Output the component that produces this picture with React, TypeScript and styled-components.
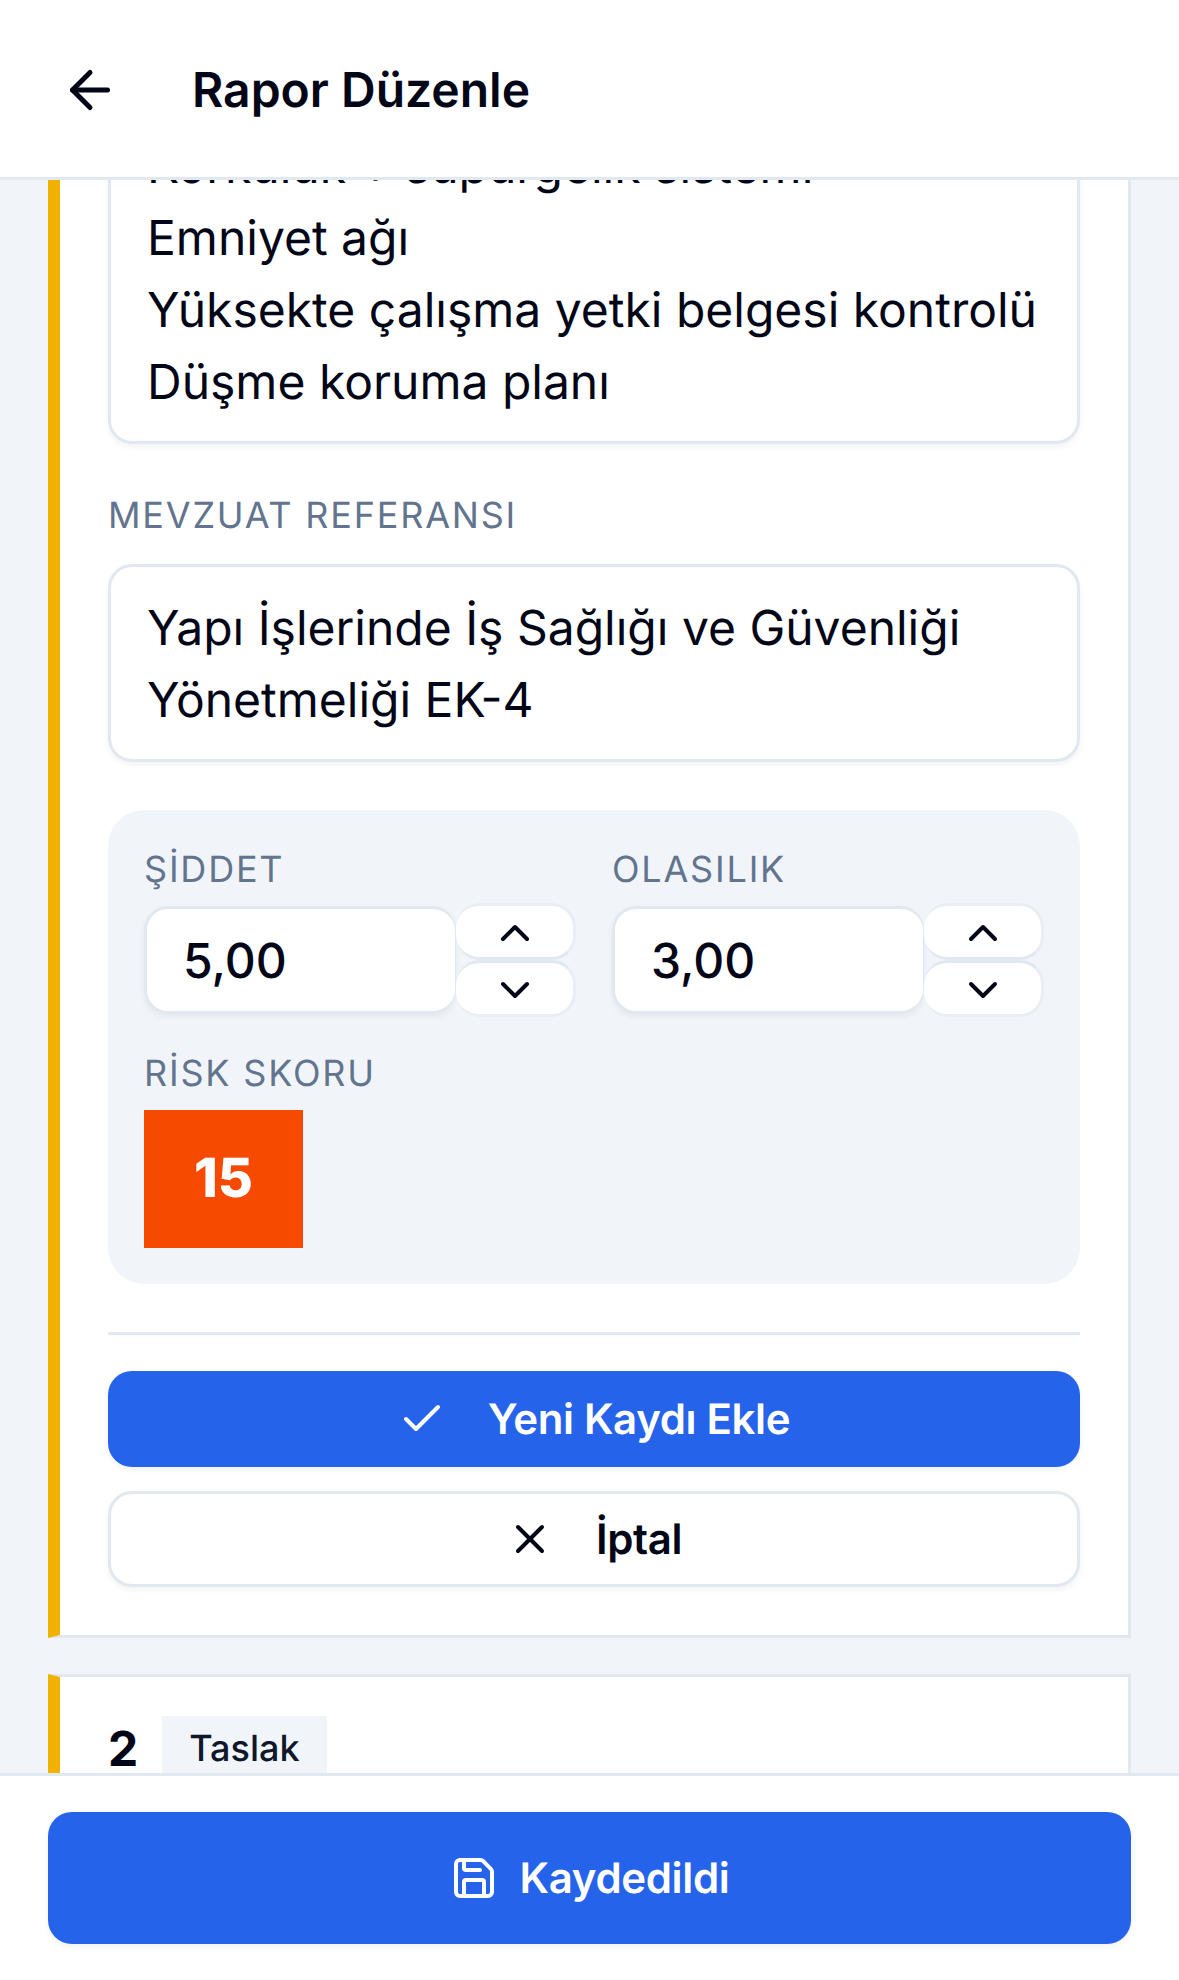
import React from "react";
import styled, { createGlobalStyle } from "styled-components";
import { ArrowLeft, Check, ChevronDown, ChevronUp, Save, X } from "lucide-react";

const Global = createGlobalStyle`
  html, body { margin: 0; padding: 0; background: #fff; }
  * { box-sizing: border-box; text-rendering: geometricPrecision; }
  body { font-family: Inter, "Noto Sans", sans-serif; color: #020617; }
`;

const Screen = styled.div`
  width: 1179px;
  height: 1980px;
  display: flex;
  flex-direction: column;
  overflow: hidden;
  background: #f1f5f9;
`;

const Header = styled.header`
  flex: none;
  height: 180px;
  display: flex;
  align-items: center;
  gap: 72px;
  padding: 3px 0 0 60px;
  background: #fff;
  border-bottom: 3px solid #e2e8f0;
`;

const BackIcon = styled(ArrowLeft)`
  flex: none;
  color: #020617;
`;

const Title = styled.h1`
  margin: 0;
  font-size: 48px;
  line-height: 72px;
  font-weight: 600;
  color: #020617;
`;

const Viewport = styled.main`
  flex: 1;
  min-height: 0;
  overflow: hidden;
  padding: 0 48px;
`;

const CardList = styled.div`
  display: flex;
  flex-direction: column;
  gap: 36px;
  margin-top: -129px;
`;

const Card = styled.section`
  background: #fff;
  border: 3px solid #e2e8f0;
  border-left: 12px solid #f0b100;
  padding: 48px;
  display: flex;
  flex-direction: column;
`;

const Field = styled.div`
  border: 3px solid #e2e8f0;
  border-radius: 24px;
  background: #fff;
  padding: 25px 36px 23px;
  font-size: 48px;
  line-height: 72px;
  color: #020617;
  white-space: pre-line;
  box-shadow: 0 3px 6px rgba(15, 23, 42, 0.05);
`;

const Label = styled.div`
  height: 48px;
  font-size: 36px;
  line-height: 46px;
  font-weight: 400;
  letter-spacing: 1.8px;
  color: #62748e;
`;

const SectionLabel = styled(Label)`
  margin: 48px 0 24px;
`;

const ScorePanel = styled.div`
  margin-top: 48px;
  padding: 36px;
  border-radius: 36px;
  background: #f1f5f9;
`;

const ScoreGrid = styled.div`
  display: grid;
  grid-template-columns: repeat(2, minmax(0, 1fr));
  column-gap: 36px;
`;

const ScoreColumn = styled.div`
  min-width: 0;
  display: flex;
  flex-direction: column;
  gap: 12px;
`;

const NumberRow = styled.div`
  display: flex;
  height: 108px;
`;

const NumberInput = styled.input`
  flex: 1;
  width: 0;
  min-width: 0;
  height: 108px;
  border: 3px solid #e2e8f0;
  border-right-width: 1px;
  border-radius: 24px;
  background: #fff;
  padding: 1px 36px 0;
  font: 500 48px/72px Inter, sans-serif;
  color: #020617;
  outline: none;
  box-shadow: 0 3px 6px rgba(15, 23, 42, 0.05);
`;

const Stepper = styled.div`
  flex: none;
  width: 120px;
  margin: -3px 0;
  height: 114px;
  display: flex;
  flex-direction: column;
`;

const StepButton = styled.button`
  flex: 1;
  display: flex;
  align-items: center;
  justify-content: center;
  padding: 3px 0 0;
  border: 3px solid #e9eef5;
  border-left-width: 0;
  border-radius: 24px;
  background: #fff;
  color: #020617;

  &:first-child {
    border-bottom-color: #e2e8f0;
  }

  &:last-child {
    border-top-color: #e2e8f0;
  }
`;

const RiskBlock = styled.div`
  margin-top: 36px;
  display: flex;
  flex-direction: column;
  align-items: flex-start;
  gap: 12px;
`;

const RiskBadge = styled.div`
  width: 159px;
  height: 138px;
  padding-bottom: 1px;
  display: flex;
  align-items: center;
  justify-content: center;
  background: #f54a00;
  color: #fff;
  font-size: 54px;
  font-weight: 800;
`;

const Divider = styled.hr`
  margin: 48px 0 36px;
  height: 3px;
  border: 0;
  background: #e2e8f0;
`;

const Actions = styled.div`
  display: flex;
  flex-direction: column;
  gap: 24px;
`;

const ActionButton = styled.button<{ $primary?: boolean }>`
  height: 96px;
  display: flex;
  align-items: center;
  justify-content: center;
  gap: 42px;
  padding: 0;
  border-radius: 24px;
  border: ${(p) => (p.$primary ? "0" : "3px solid #e2e8f0")};
  background: ${(p) => (p.$primary ? "#2563eb" : "#fff")};
  color: ${(p) => (p.$primary ? "#fff" : "#020617")};
  font: 600 42px/60px Inter, sans-serif;
  letter-spacing: -0.35px;
  box-shadow: 0 3px 6px rgba(15, 23, 42, 0.05);
`;

const ButtonText = styled.span`
  padding-top: 2px;
`;

const CardHead = styled.div`
  display: flex;
  align-items: center;
  gap: 24px;
  margin-top: -12px;
`;

const RowNumber = styled.span`
  font-size: 48px;
  line-height: 72px;
  font-weight: 700;
  color: #020617;
`;

const StatusTag = styled.span`
  height: 66px;
  padding: 0 27px 2px;
  display: flex;
  align-items: center;
  background: #f1f5f9;
  color: #0f172b;
  font-size: 36px;
  font-weight: 500;
`;

const Footer = styled.footer`
  flex: none;
  height: 207px;
  padding: 36px 48px;
  background: #fff;
  border-top: 3px solid #e2e8f0;
`;

const SaveButton = styled.button`
  width: 100%;
  height: 132px;
  display: flex;
  align-items: center;
  justify-content: center;
  gap: 22px;
  border: 0;
  border-radius: 24px;
  background: #2563eb;
  color: #fff;
  font: 600 42px/60px Inter, sans-serif;
  letter-spacing: -0.35px;
  box-shadow: 0 3px 6px rgba(15, 23, 42, 0.05);
`;

const ScoreField = ({ label, value }: { label: string; value: string }) => (
  <ScoreColumn>
    <Label>{label}</Label>
    <NumberRow>
      <NumberInput readOnly value={value} />
      <Stepper>
        <StepButton aria-label="Artır">
          <ChevronUp size={48} />
        </StepButton>
        <StepButton aria-label="Azalt">
          <ChevronDown size={48} />
        </StepButton>
      </Stepper>
    </NumberRow>
  </ScoreColumn>
);

export default function App() {
  return (
    <>
      <Global />
      <Screen>
        <Header>
          <BackIcon size={60} />
          <Title>Rapor Düzenle</Title>
        </Header>
        <Viewport>
          <CardList>
            <Card>
              <Field>
                {"Korkuluk + süpürgelik sistemi\nEmniyet ağı\nYüksekte çalışma yetki belgesi kontrolü\nDüşme koruma planı"}
              </Field>
              <SectionLabel>MEVZUAT REFERANSI</SectionLabel>
              <Field>Yapı İşlerinde İş Sağlığı ve Güvenliği Yönetmeliği EK-4</Field>
              <ScorePanel>
                <ScoreGrid>
                  <ScoreField label="ŞİDDET" value="5,00" />
                  <ScoreField label="OLASILIK" value="3,00" />
                </ScoreGrid>
                <RiskBlock>
                  <Label>RİSK SKORU</Label>
                  <RiskBadge>15</RiskBadge>
                </RiskBlock>
              </ScorePanel>
              <Divider />
              <Actions>
                <ActionButton $primary>
                  <Check size={48} />
                  <ButtonText>Yeni Kaydı Ekle</ButtonText>
                </ActionButton>
                <ActionButton>
                  <X size={48} />
                  <ButtonText>İptal</ButtonText>
                </ActionButton>
              </Actions>
            </Card>
            <Card>
              <CardHead>
                <RowNumber>2</RowNumber>
                <StatusTag>Taslak</StatusTag>
              </CardHead>
            </Card>
          </CardList>
        </Viewport>
        <Footer>
          <SaveButton>
            <Save size={48} />
            <ButtonText>Kaydedildi</ButtonText>
          </SaveButton>
        </Footer>
      </Screen>
    </>
  );
}
